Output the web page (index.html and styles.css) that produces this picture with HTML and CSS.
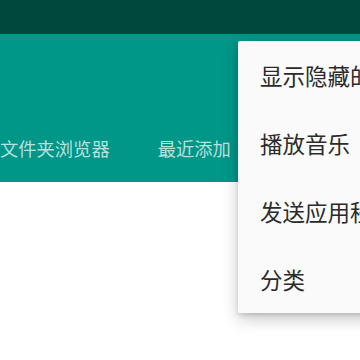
FILE: index.html
```html
<!DOCTYPE html>
<html lang="zh-CN">
<head>
    <meta charset="UTF-8">
    <meta name="viewport" content="width=device-width, initial-scale=1.0">
    <title>音乐</title>
    <link rel="stylesheet" href="styles.css">
</head>
<body>
    <div class="status-bar"></div>
    <header class="toolbar">
        <nav class="tabs">
            <div class="tab">文件夹浏览器</div>
            <div class="tab">最近添加</div>
        </nav>
    </header>
    <main class="content"></main>

    <ul class="menu">
        <li class="menu-item">显示隐藏的文件夹</li>
        <li class="menu-item">播放音乐</li>
        <li class="menu-item">发送应用程序</li>
        <li class="menu-item">分类</li>
    </ul>
</body>
</html>
```

FILE: styles.css
```css
body {
    margin: 0;
    width: 360px;
    height: 360px;
    overflow: hidden;
    position: relative;
    background-color: #ffffff;
    font-family: Roboto, "Noto Sans CJK SC", sans-serif;
}

.status-bar {
    height: 34px;
    background-color: #00483e;
}

.toolbar {
    height: 148px;
    background-color: #009688;
    display: flex;
    flex-direction: column;
    justify-content: flex-end;
}

.tabs {
    display: flex;
    height: 48px;
    margin-bottom: 10px;
    margin-left: -24px;
    white-space: nowrap;
}

.tab {
    display: flex;
    align-items: center;
    padding: 0 24px;
    font-size: 18.3px;
    color: rgba(255, 255, 255, 0.72);
}

.menu {
    position: absolute;
    top: 41px;
    left: 238px;
    width: 200px;
    margin: 0;
    padding: 0;
    list-style: none;
    background-color: #fafafa;
    box-shadow: 0 6px 16px rgba(0, 0, 0, 0.22), 0 2px 4px rgba(0, 0, 0, 0.12);
    border-radius: 2px;
}

.menu-item {
    height: 68px;
    display: flex;
    align-items: center;
    padding-left: 22px;
    font-size: 22.5px;
    color: #2b2b2b;
    white-space: nowrap;
}
```
